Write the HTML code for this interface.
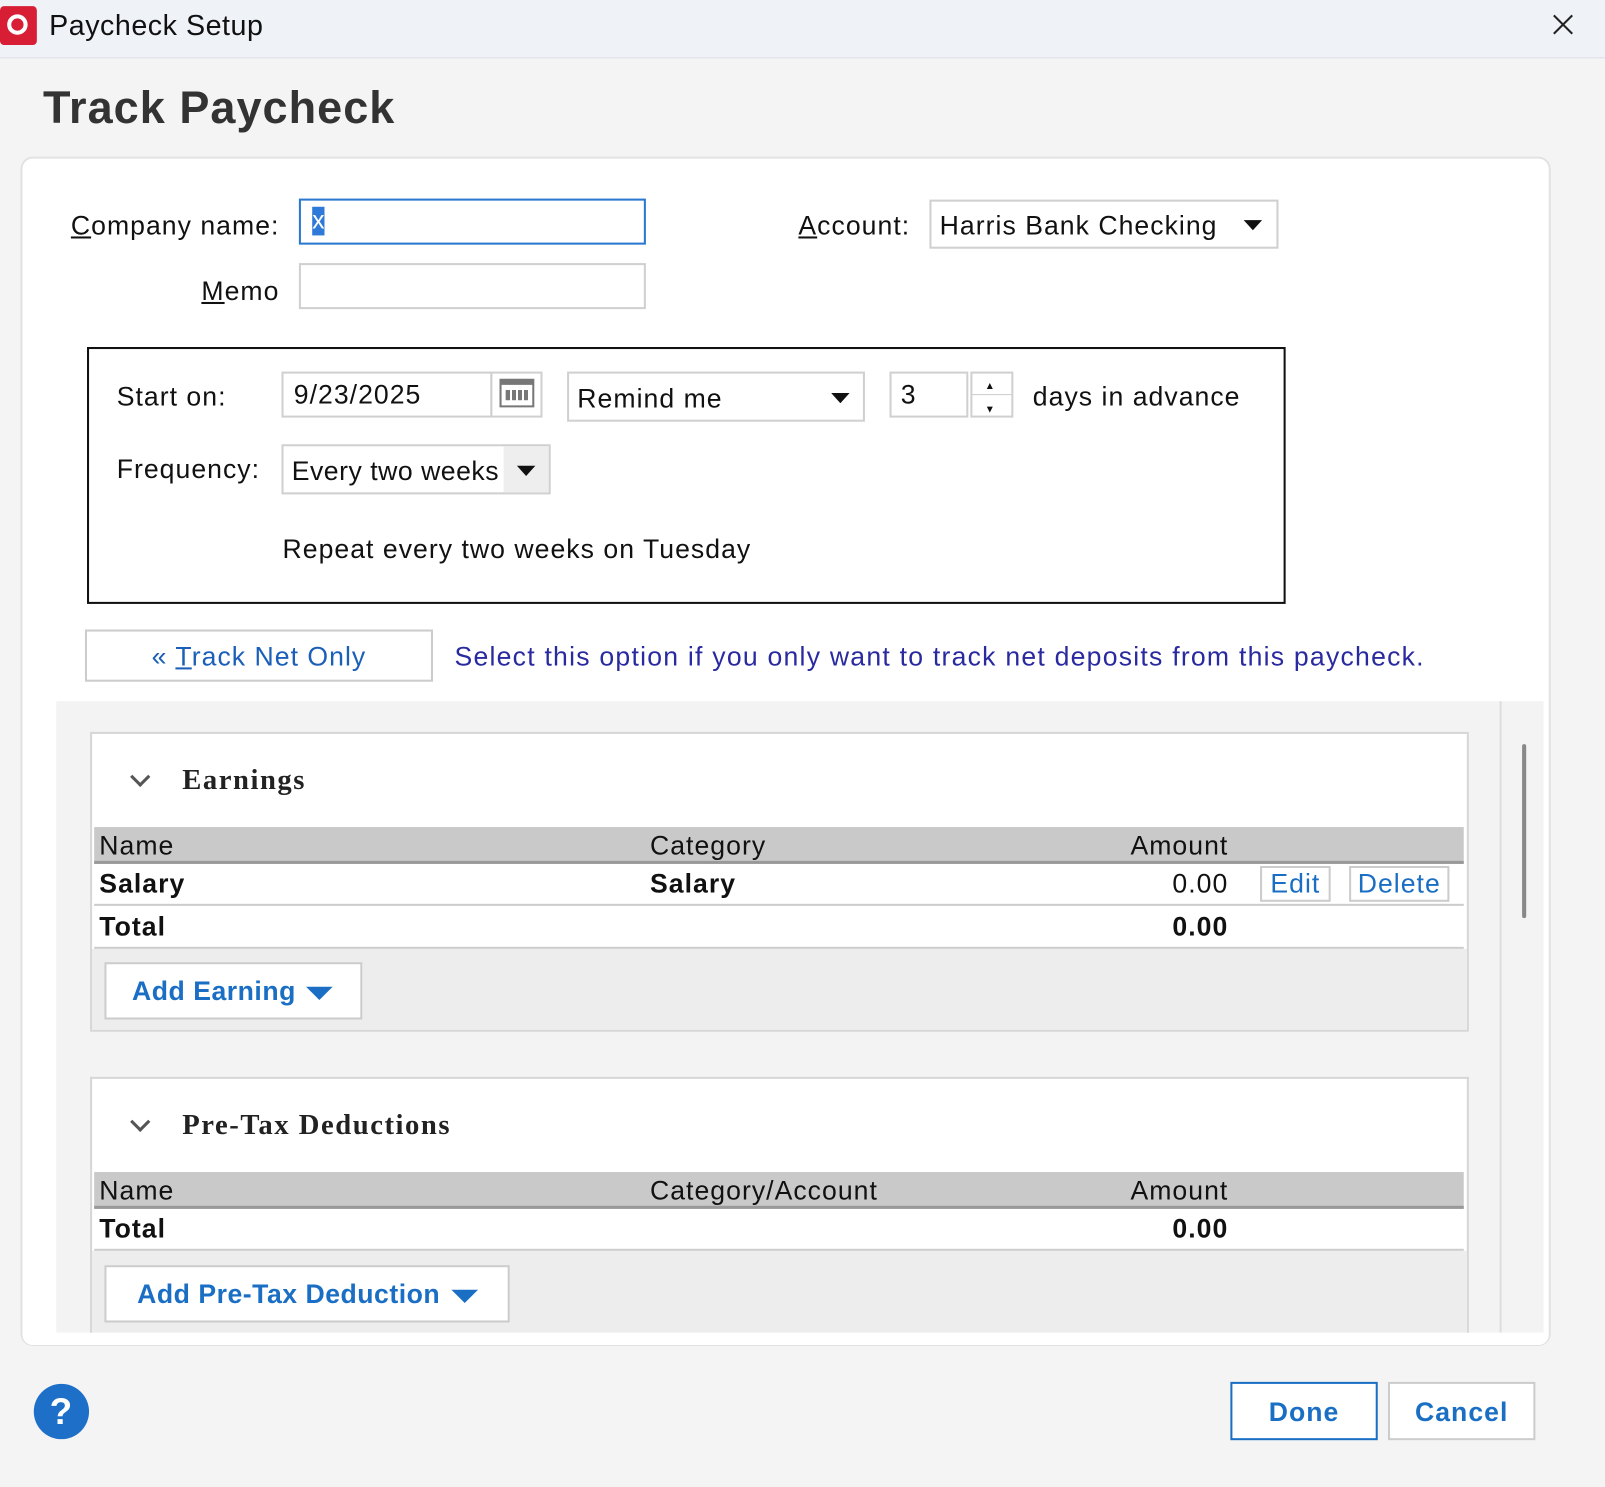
<!DOCTYPE html>
<html><head><meta charset="utf-8"><style>
*{box-sizing:border-box;margin:0;padding:0}
html,body{width:1605px;height:1487px;overflow:hidden;background:#f4f4f4;font-family:"Liberation Sans",sans-serif;color:#111}
#w{position:absolute;left:0;top:0;width:1568px;height:1453px;transform:scale(1.02360);transform-origin:0 0}
.a{position:absolute}
.t{position:absolute;white-space:nowrap;font-size:26px;line-height:30px;letter-spacing:1px}
.inp{position:absolute;background:#fff;border:2px solid #d0d0d0}
.arr{position:absolute;width:0;height:0;border-left:9px solid transparent;border-right:9px solid transparent;border-top:10px solid #111}
.hdr{position:absolute;left:92px;width:1338px;background:#c9c9c9;border-bottom:3px solid #999;height:36px}
.row{position:absolute;left:92px;width:1338px;border-bottom:2px solid #ccc;height:42px}
.blue{color:#1a6fc4}
.btn{position:absolute;background:#fff;border:2px solid #ccc}
</style></head><body><div id="w">
<div class="a" style="left:0;top:0;width:1568px;height:57px;background:#eff2f7;border-bottom:1px solid #dcdfe5"></div>
<div class="a" style="left:0;top:6px;width:36px;height:38px;background:#d71e35;border-radius:4px"></div>
<div class="a" style="left:7px;top:14px;width:20px;height:20px;border:4px solid #fff;border-radius:50%"></div>
<div class="t" style="left:48px;top:10px;font-size:28px;letter-spacing:0.5px">Paycheck Setup</div>
<svg class="a" style="left:1516px;top:13px" width="22" height="22"><path d="M2 2L20 20M20 2L2 20" stroke="#222" stroke-width="2"/></svg>

<div class="t" style="left:42px;top:82px;font-size:44px;line-height:48px;font-weight:bold;color:#333">Track Paycheck</div>

<div class="a" style="left:20px;top:153px;width:1495px;height:1162px;background:#fff;border:2px solid #e2e2e2;border-radius:12px"></div>

<div class="t" style="left:60px;top:205px;width:213px;text-align:right"><u>C</u>ompany name:</div>
<div class="inp" style="left:292px;top:194px;width:339px;height:45px;border-color:#2a78d0"></div>
<div class="a" style="left:305px;top:202px;width:12px;height:28px;background:#2f7ad8"></div>
<div class="t" style="left:305px;top:201px;color:#fff;font-size:24px">x</div>
<div class="t" style="left:75px;top:269px;width:198px;text-align:right"><u>M</u>emo</div>
<div class="inp" style="left:292px;top:257px;width:339px;height:45px"></div>

<div class="t" style="left:780px;top:205px"><u>A</u>ccount:</div>
<div class="inp" style="left:908px;top:195px;width:341px;height:48px"></div>
<div class="t" style="left:918px;top:205px">Harris Bank Checking</div>
<div class="arr" style="left:1215px;top:215px"></div>

<div class="a" style="left:85px;top:339px;width:1171px;height:251px;border:2px solid #111"></div>
<div class="t" style="left:114px;top:372px">Start on:</div>
<div class="inp" style="left:275px;top:363px;width:255px;height:45px"></div>
<div class="a" style="left:479px;top:365px;width:2px;height:41px;background:#ccc"></div>
<div class="a" style="left:488px;top:370px;width:34px;height:28px;border:2px solid #777;border-top:6px solid #777"></div>
<div class="a" style="left:494px;top:381px;width:22px;height:10px;background:repeating-linear-gradient(90deg,#777 0 4px,transparent 4px 6px)"></div>
<div class="t" style="left:287px;top:370px">9/23/2025</div>
<div class="inp" style="left:554px;top:363px;width:291px;height:49px"></div>
<div class="t" style="left:564px;top:374px">Remind me</div>
<div class="arr" style="left:812px;top:384px"></div>
<div class="inp" style="left:869px;top:363px;width:77px;height:45px"></div>
<div class="t" style="left:880px;top:370px">3</div>
<div class="inp" style="left:948px;top:363px;width:42px;height:45px"></div>
<div class="a" style="left:950px;top:385px;width:38px;height:1px;background:#ccc"></div>
<div class="t" style="left:962px;top:363px;font-size:10px">▲</div>
<div class="t" style="left:962px;top:386px;font-size:10px">▼</div>
<div class="t" style="left:1009px;top:372px">days in advance</div>
<div class="t" style="left:114px;top:443px">Frequency:</div>
<div class="inp" style="left:275px;top:434px;width:263px;height:49px"></div>
<div class="a" style="left:492px;top:436px;width:44px;height:45px;background:#eee"></div>
<div class="t" style="left:285px;top:445px;letter-spacing:0.5px">Every two weeks</div>
<div class="arr" style="left:505px;top:455px"></div>
<div class="t" style="left:276px;top:521px">Repeat every two weeks on Tuesday</div>

<div class="btn" style="left:83px;top:615px;width:340px;height:51px"></div>
<div class="t" style="left:83px;top:626px;width:340px;text-align:center;color:#1a5fb8">« <u>T</u>rack Net Only</div>
<div class="t" style="left:444px;top:626px;color:#2a2aa0;letter-spacing:1.2px">Select this option if you only want to track net deposits from this paycheck.</div>

<div class="a" style="left:55px;top:685px;width:1453px;height:617px;background:#f3f3f3"></div>
<div class="a" style="left:1465px;top:685px;width:2px;height:617px;background:#ddd"></div>
<div class="a" style="left:1487px;top:727px;width:4px;height:170px;background:#888;border-radius:2px"></div>

<div class="a" style="left:88px;top:715px;width:1347px;height:293px;background:#fff;border:2px solid #d6d6d6"></div>
<div class="a" style="left:130px;top:752px;width:14px;height:14px;border-right:3px solid #555;border-bottom:3px solid #555;transform:rotate(45deg)"></div>
<div class="t" style="left:178px;top:748px;font-size:28px;font-family:'Liberation Serif',serif;font-weight:bold;color:#222;letter-spacing:1.5px">Earnings</div>
<div class="hdr" style="top:808px"></div>
<div class="t" style="left:97px;top:811px">Name</div>
<div class="t" style="left:635px;top:811px">Category</div>
<div class="t" style="left:1000px;top:811px;width:200px;text-align:right">Amount</div>
<div class="row" style="top:843px"></div>
<div class="t" style="left:97px;top:848px;font-weight:bold">Salary</div>
<div class="t" style="left:635px;top:848px;font-weight:bold">Salary</div>
<div class="t" style="left:1000px;top:848px;width:200px;text-align:right">0.00</div>
<div class="btn" style="left:1231px;top:846px;width:69px;height:35px"></div>
<div class="t blue" style="left:1231px;top:848px;width:69px;text-align:center">Edit</div>
<div class="btn" style="left:1318px;top:846px;width:98px;height:35px"></div>
<div class="t blue" style="left:1318px;top:848px;width:98px;text-align:center">Delete</div>
<div class="row" style="top:885px"></div>
<div class="t" style="left:97px;top:890px;font-weight:bold">Total</div>
<div class="t" style="left:1000px;top:890px;width:200px;text-align:right;font-weight:bold">0.00</div>
<div class="a" style="left:90px;top:927px;width:1343px;height:79px;background:#ededed"></div>
<div class="btn" style="left:102px;top:940px;width:252px;height:56px"></div>
<div class="t blue" style="left:129px;top:953px;font-weight:bold;letter-spacing:0.5px">Add Earning</div>
<div class="arr" style="left:299px;top:964px;border-top-color:#1a6fc4;border-left-width:13px;border-right-width:13px;border-top-width:13px"></div>

<div class="a" style="left:88px;top:1052px;width:1347px;height:260px;background:#fff;border:2px solid #d6d6d6;border-bottom:none"></div>
<div class="a" style="left:130px;top:1089px;width:14px;height:14px;border-right:3px solid #555;border-bottom:3px solid #555;transform:rotate(45deg)"></div>
<div class="t" style="left:178px;top:1085px;font-size:28px;font-family:'Liberation Serif',serif;font-weight:bold;color:#222;letter-spacing:1.5px">Pre-Tax Deductions</div>
<div class="hdr" style="top:1145px"></div>
<div class="t" style="left:97px;top:1148px">Name</div>
<div class="t" style="left:635px;top:1148px">Category/Account</div>
<div class="t" style="left:1000px;top:1148px;width:200px;text-align:right">Amount</div>
<div class="row" style="top:1180px"></div>
<div class="t" style="left:97px;top:1185px;font-weight:bold">Total</div>
<div class="t" style="left:1000px;top:1185px;width:200px;text-align:right;font-weight:bold">0.00</div>
<div class="a" style="left:90px;top:1222px;width:1343px;height:80px;background:#ededed"></div>
<div class="btn" style="left:102px;top:1236px;width:396px;height:56px"></div>
<div class="t blue" style="left:134px;top:1249px;font-weight:bold;letter-spacing:0.5px">Add Pre-Tax Deduction</div>
<div class="arr" style="left:441px;top:1260px;border-top-color:#1a6fc4;border-left-width:13px;border-right-width:13px;border-top-width:13px"></div>
<div class="a" style="left:22px;top:1302px;width:1491px;height:12px;background:#fff;border-radius:0 0 10px 10px"></div>

<div class="a" style="left:33px;top:1352px;width:54px;height:54px;border-radius:50%;background:#1e6fc8"></div>
<div class="t" style="left:33px;top:1360px;width:54px;text-align:center;color:#fff;font-size:36px;line-height:38px;font-weight:bold">?</div>
<div class="btn" style="left:1202px;top:1350px;width:144px;height:57px;border-color:#1a6fc4"></div>
<div class="t blue" style="left:1202px;top:1364px;width:144px;text-align:center;font-weight:bold">Done</div>
<div class="btn" style="left:1356px;top:1350px;width:144px;height:57px"></div>
<div class="t blue" style="left:1356px;top:1364px;width:144px;text-align:center;font-weight:bold">Cancel</div>
</div></body></html>
